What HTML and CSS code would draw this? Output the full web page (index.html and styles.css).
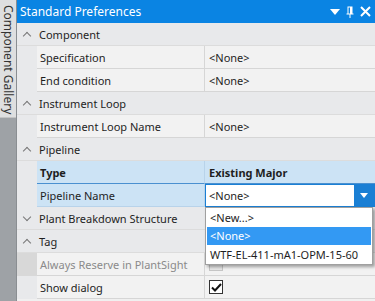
FILE: index.html
```html
<!DOCTYPE html>
<html lang="en">
<head>
    <meta charset="UTF-8">
    <title>Standard Preferences</title>
    <link rel="stylesheet" href="styles.css">
</head>
<body>
    <div class="sidebar">
        <div class="side-tab"><span>Component Gallery</span></div>
    </div>

    <div class="panel">
        <div class="titlebar">
            <span class="title">Standard Preferences</span>
            <div class="title-icons">
                <svg width="10" height="6" viewBox="0 0 10 6"><path d="M0 0H10L5 6Z" fill="#fff"/></svg>
                <svg width="8" height="12" viewBox="0 0 8 12"><path d="M1.5 0.5H6.5V7.5H7.5V8.5H4.5V12H3.5V8.5H0.5V7.5H1.5ZM2.5 1.5V7.5H4V1.5Z" fill="#fff"/></svg>
                <svg width="11" height="11" viewBox="0 0 11 11"><path d="M1 1L10 10M10 1L1 10" stroke="#fff" stroke-width="2"/></svg>
            </div>
        </div>

        <div class="grid">
            <div class="cat"><span class="chev up"></span><span class="cat-name">Component</span></div>
            <div class="prop"><span class="indent"></span><span class="name">Specification</span><span class="value">&lt;None&gt;</span></div>
            <div class="prop"><span class="indent"></span><span class="name">End condition</span><span class="value">&lt;None&gt;</span></div>

            <div class="cat"><span class="chev up"></span><span class="cat-name">Instrument Loop</span></div>
            <div class="prop"><span class="indent"></span><span class="name">Instrument Loop Name</span><span class="value">&lt;None&gt;</span></div>

            <div class="cat"><span class="chev up"></span><span class="cat-name">Pipeline</span></div>
            <div class="prop selected head"><span class="indent"></span><span class="name bold">Type</span><span class="value bold">Existing Major</span></div>
            <div class="prop selected"><span class="indent"></span><span class="name">Pipeline Name</span>
                <div class="combo">
                    <span class="combo-text">&lt;None&gt;</span>
                    <span class="combo-btn"><svg width="8" height="5" viewBox="0 0 8 5"><path d="M0 0H8L4 5Z" fill="#fff"/></svg></span>
                </div>
            </div>

            <div class="cat"><span class="chev down"></span><span class="cat-name">Plant Breakdown Structure</span></div>

            <div class="cat"><span class="chev up"></span><span class="cat-name">Tag</span></div>
            <div class="prop disabled"><span class="indent"></span><span class="name">Always Reserve in PlantSight</span><span class="value"><span class="check off"></span></span></div>
            <div class="prop"><span class="indent"></span><span class="name">Show dialog</span><span class="value"><span class="check on"><svg width="11" height="9" viewBox="0 0 11 9"><path d="M1 4.5L4 7.5L10 1" stroke="#111" stroke-width="2" fill="none"/></svg></span></span></div>
        </div>

        <ul class="popup">
            <li>&lt;New...&gt;</li>
            <li class="active">&lt;None&gt;</li>
            <li>WTF-EL-411-mA1-OPM-15-60</li>
        </ul>
    </div>
</body>
</html>
```

FILE: styles.css
```css
* {
    margin: 0;
    padding: 0;
    box-sizing: border-box;
}

body {
    font-family: "Noto Sans", "Open Sans", sans-serif;
    font-size: 11px;
    color: #1e1e1e;
    width: 375px;
    height: 301px;
    overflow: hidden;
    display: flex;
    background: #f0f0f0;
}

.sidebar {
    width: 17px;
    background: #9ea2a6;
    border-right: 1px solid #8a8e92;
    flex-shrink: 0;
}

.side-tab {
    height: 118px;
    width: 16px;
    background: #dedfe0;
    border-bottom: 1px solid #c4c4c4;
    display: flex;
    justify-content: center;
    padding-top: 5px;
}

.side-tab span {
    writing-mode: vertical-rl;
    font-size: 12px;
    color: #333;
    white-space: nowrap;
    line-height: 16px;
}

.panel {
    flex: 1;
    position: relative;
    display: flex;
    flex-direction: column;
}

.titlebar {
    height: 23px;
    background: #0a84e3;
    color: #fff;
    display: flex;
    align-items: center;
    justify-content: space-between;
    padding: 0 4px 0 3px;
}

.title {
    font-size: 12px;
}

.title-icons {
    display: flex;
    align-items: center;
    gap: 6px;
}

.grid {
    display: flex;
    flex-direction: column;
}

.cat {
    height: 23px;
    display: flex;
    align-items: center;
    background: #e8e9eb;
    border-bottom: 1px solid #dcdcdc;
}

.chev {
    width: 20px;
    height: 23px;
    position: relative;
    flex-shrink: 0;
}

.chev::after {
    content: "";
    position: absolute;
    left: 7px;
    width: 5px;
    height: 5px;
    border-left: 1px solid #777;
    border-top: 1px solid #777;
}

.chev.up::after {
    top: 10px;
    transform: rotate(45deg);
}

.chev.down::after {
    top: 7px;
    transform: rotate(225deg);
}

.cat-name {
    padding-left: 2px;
}

.prop {
    height: 23px;
    display: grid;
    grid-template-columns: 20px 168px 1fr;
    background: #e8e9eb;
}

.indent {
    background: #e8e9eb;
}

.name, .value {
    display: flex;
    align-items: center;
    background: #f2f2f2;
    border-bottom: 1px solid #d6d6d6;
}

.name {
    padding-left: 3px;
    border-right: 1px solid #d6d6d6;
}

.value {
    padding-left: 4px;
}

.bold {
    font-weight: bold;
}

.selected .name, .selected .value {
    background: #cce3f5;
    border-color: #b8d3ea;
}

.selected.head .name, .selected.head .value {
    border-bottom: 1px solid #4a90d0;
}

.disabled .indent {
    background: #d8d8d8;
}

.disabled .name {
    color: #8a8a8a;
}

.combo {
    display: flex;
    background: #fff;
    border: 1px solid #1a7fd4;
}

.combo-text {
    flex: 1;
    display: flex;
    align-items: center;
    padding-left: 3px;
}

.combo-btn {
    width: 20px;
    background: #1a7fd4;
    display: flex;
    align-items: center;
    justify-content: center;
}

.check {
    width: 14px;
    height: 14px;
    border: 1px solid #bbb;
    display: flex;
    align-items: center;
    justify-content: center;
}

.check.off {
    background: #e6e6e6;
    border-color: #c6c6c6;
}

.check.on {
    background: #fff;
    border-color: #333;
}

.popup {
    list-style: none;
    position: absolute;
    left: 188px;
    top: 207px;
    width: 168px;
    background: #fff;
    border: 1px solid #a0a0a0;
    box-shadow: 2px 2px 3px rgba(0, 0, 0, 0.35);
    padding: 0 1px;
}

.popup li {
    height: 18px;
    line-height: 18px;
    padding-left: 3px;
    margin: 0.5px 0;
    white-space: nowrap;
}

.popup li.active {
    background: #3399f3;
    color: #fff;
}
```
